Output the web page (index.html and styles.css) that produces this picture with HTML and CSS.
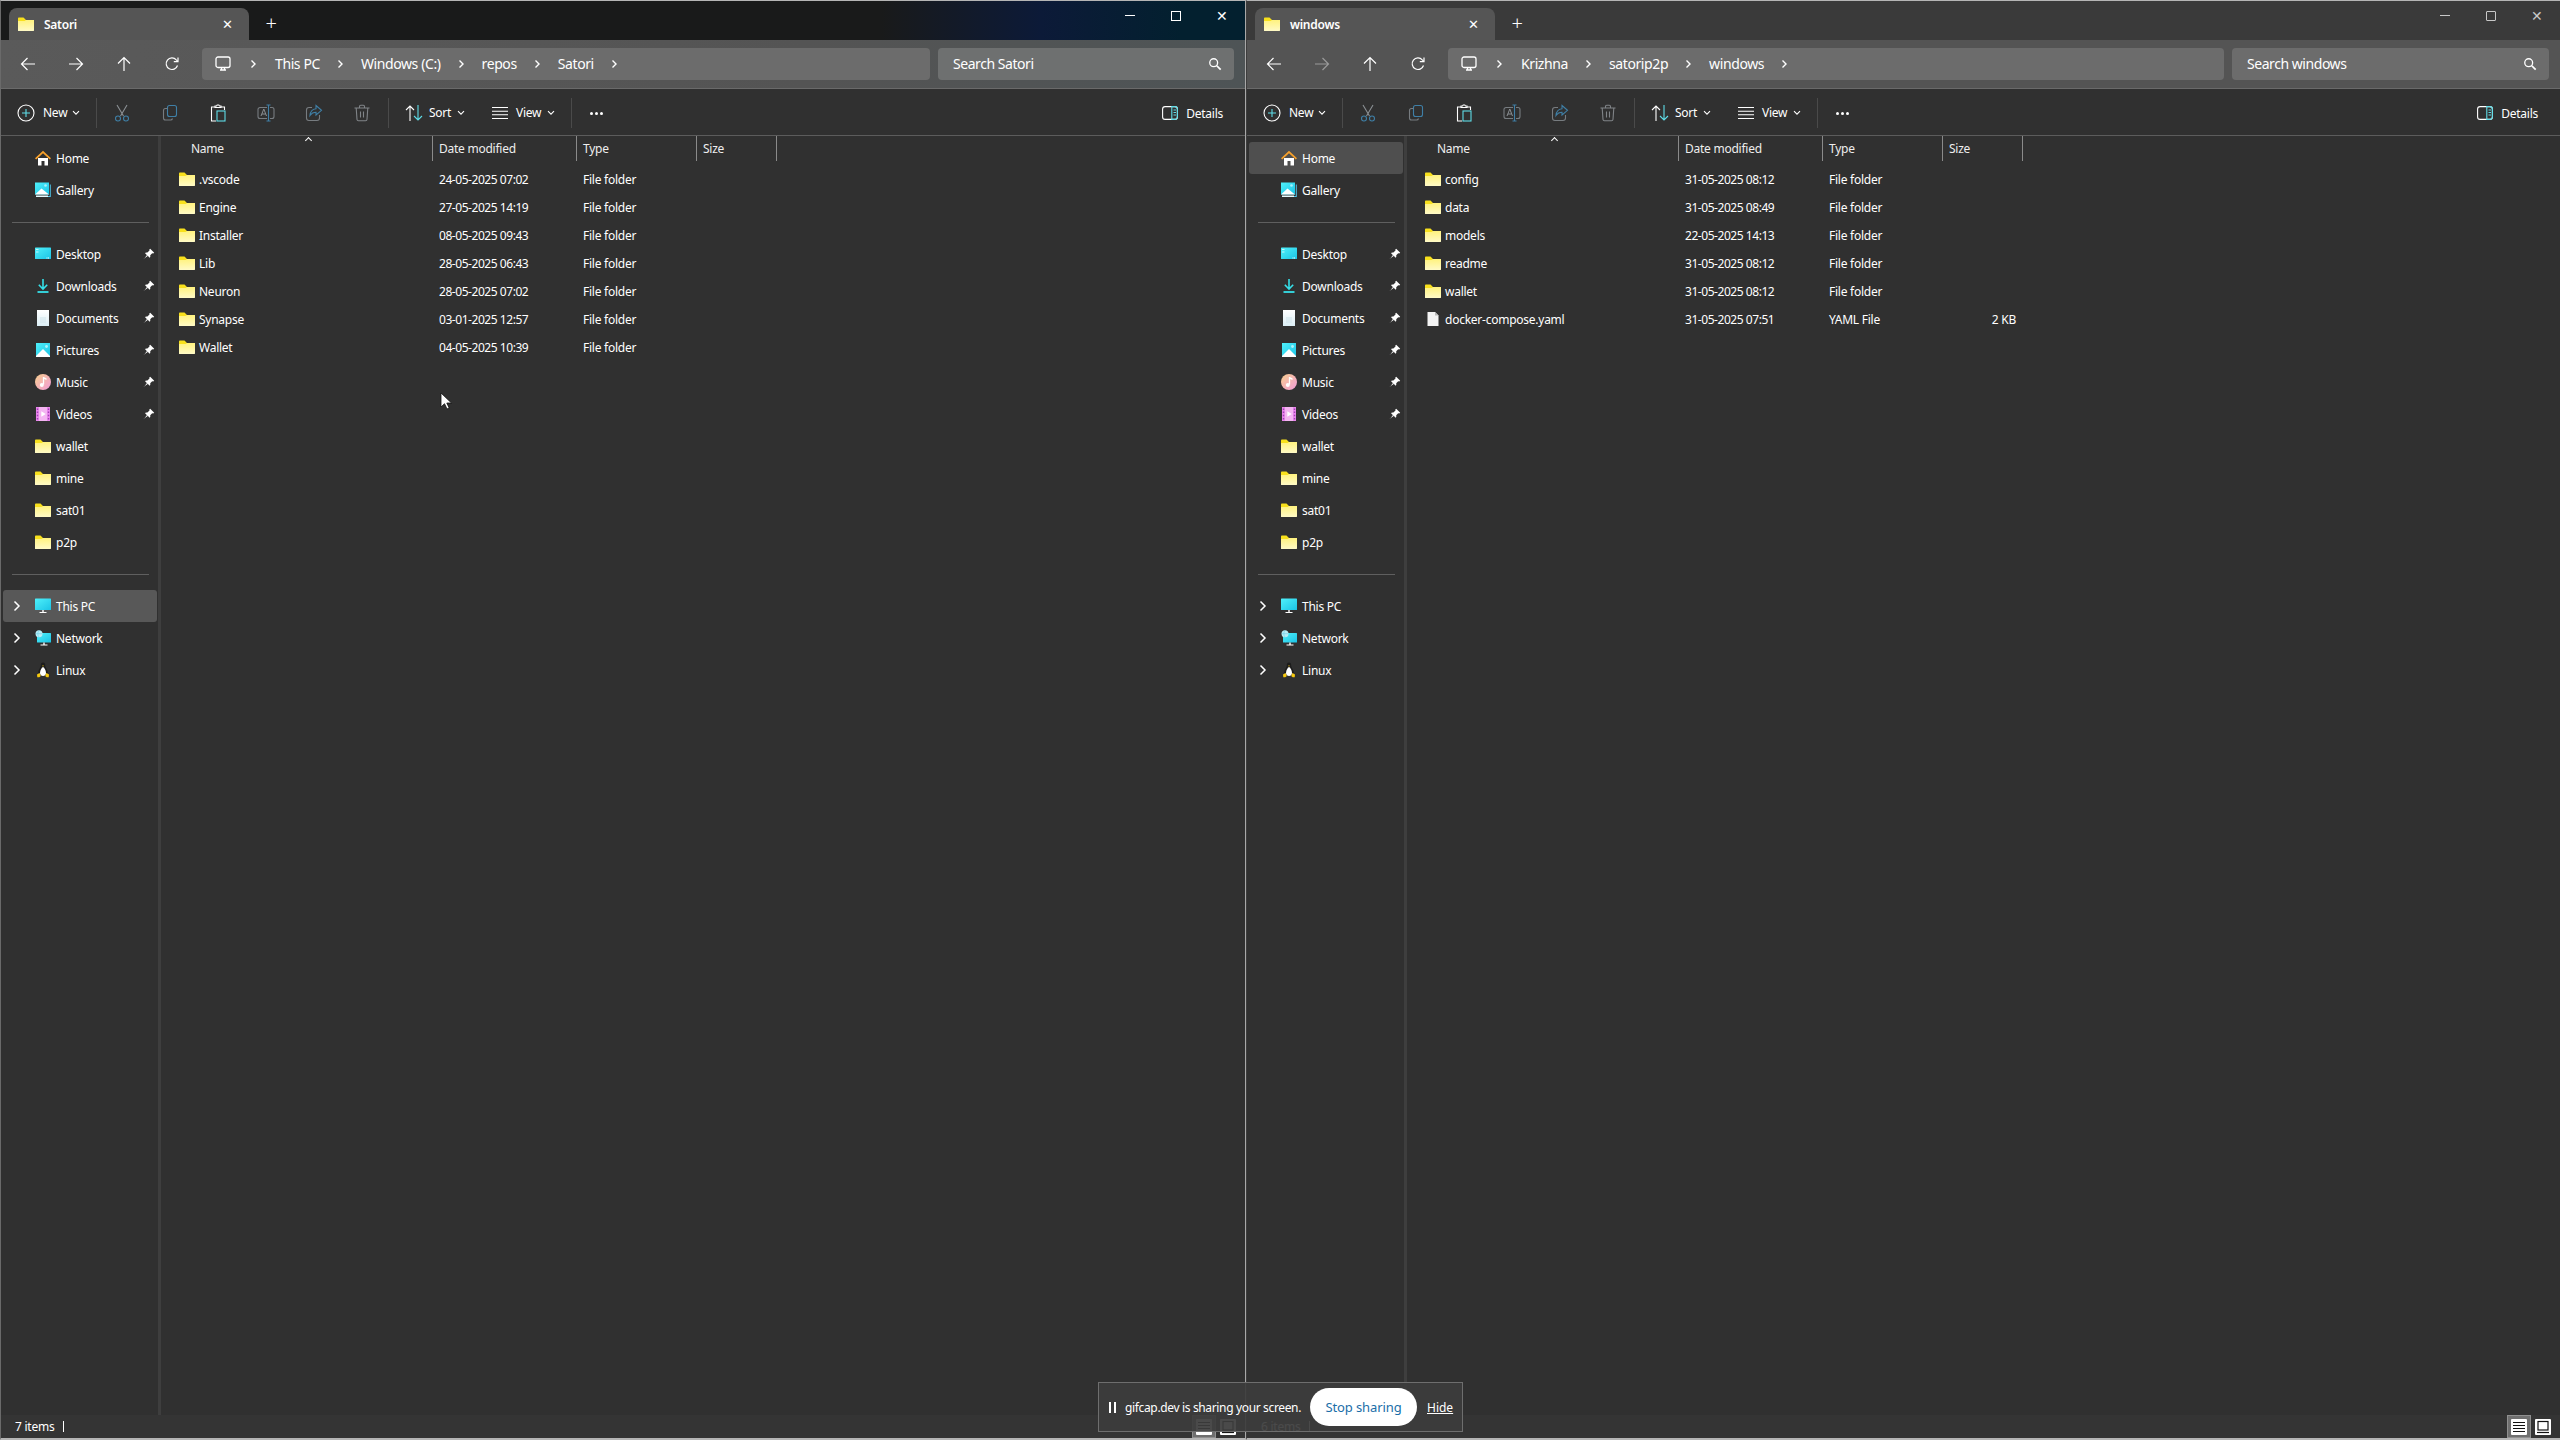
FILE: index.html
```html
<!DOCTYPE html>
<html>
<head>
    <title>File Explorer</title>
    <link rel="stylesheet" href="styles.css">
</head>
<body>
    <svg class="icon-defs" xmlns="http://www.w3.org/2000/svg">
        <defs>
            <linearGradient id="gradFolder" x1="0" y1="0" x2="0" y2="1"><stop offset="0" stop-color="#fff27e"/><stop offset="1" stop-color="#fffac6"/></linearGradient>
            <linearGradient id="gradCyan" x1="0" y1="0" x2="1" y2="1"><stop offset="0" stop-color="#4ff0fa"/><stop offset="1" stop-color="#1cc4e6"/></linearGradient>
            <linearGradient id="gradMusic" x1="0" y1="0" x2="1" y2="1"><stop offset="0" stop-color="#f7cf8e"/><stop offset="1" stop-color="#f29bd8"/></linearGradient>
            <linearGradient id="gradDoc" x1="0" y1="0" x2="0" y2="1"><stop offset="0" stop-color="#ffffff"/><stop offset="1" stop-color="#dbeef5"/></linearGradient>
        </defs>
        <symbol id="i-folder" viewBox="0 0 16 16"><path d="M0 2.5C0 2 .4 1.5 1 1.5h4.5L8 4h7.5c.3 0 .5.2.5.5V6H0z" fill="#f8e01c"/><path d="M0 5l6.5 0L8 4h8v10.5c0 .3-.2.5-.5.5H.5a.5.5 0 0 1-.5-.5z" fill="url(#gradFolder)"/></symbol>
        <symbol id="i-file" viewBox="0 0 16 16"><path d="M2.5 1h7.5l3.5 3.5V15h-11z" fill="#f3f3f3"/><path d="M10 1v3.5h3.5z" fill="#b9b9b9"/></symbol>
        <symbol id="i-home" viewBox="0 0 16 16"><path d="M3 8h10v7.5h-3.5V11h-3v4.5H3z" fill="#fff"/><path d="M8 .8l8 7.4-1.2 1.3L8 3.3 1.2 9.5 0 8.2z" fill="#f7a02a"/></symbol>
        <symbol id="i-gallery" viewBox="0 0 16 16"><path d="M14.8 2.5V14H3v1h12.8V2.5z" fill="#4fc3e8"/><rect x="0" y="0.5" width="14" height="12" fill="url(#gradCyan)"/><path d="M0 12.5l6.5-6 7.5 6z" fill="#fff"/><path d="M1 13.5h12v1.5H1z" fill="#e6fbff"/><circle cx="10.5" cy="3.5" r="1.3" fill="#a9f1fb"/></symbol>
        <symbol id="i-desktop" viewBox="0 0 16 16"><rect x="0" y="1.5" width="16" height="11.5" rx=".6" fill="url(#gradCyan)"/><path d="M1 3h2.5v1H1zM1 5.5h2.5v1H1z" fill="#c6f7fc"/><path d="M13 11.5h1v1h-1zM11.5 11.5h1v1h-1z" fill="#fff"/></symbol>
        <symbol id="i-download" viewBox="0 0 16 16"><path d="M8 1v10M3.8 6.8L8 11l4.2-4.2" fill="none" stroke="#35dfe8" stroke-width="1.6"/><path d="M2.5 14h11" stroke="#35dfe8" stroke-width="1.8"/></symbol>
        <symbol id="i-document" viewBox="0 0 16 16"><rect x="2" y="0" width="12" height="16" fill="url(#gradDoc)"/><path d="M5 8h6M5 10h6M5 12h6" stroke="#cfe3ea" stroke-width="1"/></symbol>
        <symbol id="i-pictures" viewBox="0 0 16 16"><rect x="1" y="1" width="14" height="14" fill="url(#gradCyan)"/><path d="M1 14l7-7 7 7v1H1z" fill="#fff"/><circle cx="11.5" cy="4.5" r="1.4" fill="#aef3fb"/></symbol>
        <symbol id="i-music" viewBox="0 0 16 16"><circle cx="8" cy="8" r="8" fill="url(#gradMusic)"/><path d="M8.5 3v7.5" stroke="#fff" stroke-width="1.3"/><path d="M8.5 3l3 1.3v1.6l-3-1.2z" fill="#fff"/><circle cx="6.8" cy="11" r="2" fill="#fff"/></symbol>
        <symbol id="i-video" viewBox="0 0 16 16"><rect x="1" y="1" width="14" height="14" fill="#e986ec"/><path d="M4 1h8v14H4z" fill="#f4b4f2"/><path d="M1.8 2.5h1.4v1.4H1.8zM1.8 5.5h1.4v1.4H1.8zM1.8 8.8h1.4v1.4H1.8zM1.8 12h1.4v1.4H1.8zM12.8 2.5h1.4v1.4h-1.4zM12.8 5.5h1.4v1.4h-1.4zM12.8 8.8h1.4v1.4h-1.4zM12.8 12h1.4v1.4h-1.4z" fill="#a13fb5"/><path d="M6.3 5.2l4.4 2.8-4.4 2.8z" fill="#fff"/></symbol>
        <symbol id="i-pc" viewBox="0 0 16 16"><rect x="0" y="0.5" width="16" height="11.5" rx=".6" fill="url(#gradCyan)"/><path d="M7.3 12h1.4v2H7.3zM4.5 14h7v1h-7z" fill="#fff"/></symbol>
        <symbol id="i-network" viewBox="0 0 16 16"><rect x="2" y="3" width="14" height="9.5" rx=".5" fill="url(#gradCyan)"/><path d="M8.3 12.5h1.4v2H8.3zM5.5 14.5h7v1h-7z" fill="#fff"/><circle cx="4" cy="3.7" r="3.5" fill="#b8eef8"/><path d="M1 3.7h6M4 .4c-1.6 2-1.6 4.6 0 6.6" stroke="#6fcfe6" stroke-width=".6" fill="none"/></symbol>
        <symbol id="i-linux" viewBox="0 0 16 16"><path d="M8 .5c-1.6 0-2.3 1.3-2.2 3 .1 1.6-2.6 4.4-2.7 7.5h9.8c-.1-3.100-2.800-5.900-2.700-7.500.1-1.700-.6-3-2.200-3z" fill="#1c1c1c"/><path d="M8 5c-1.300.6-3 3.300-3 6 0 2 1.400 3 3 3s3-1 3-3c0-2.700-1.700-5.400-3-6z" fill="#fff"/><path d="M2 12.500l2.600-1.500 1.200 3-1.500 1.300H2.300zM14 12.500L11.400 11l-1.200 3 1.500 1.300h2z" fill="#f6c90e"/><path d="M7.200 3.500h1.600L8 4.700z" fill="#f6c90e"/></symbol>
        <symbol id="i-pin" viewBox="0 0 12 12"><path d="M7.200.8l4 4-1 .6-1-.2-2 2.100c.3 1 .1 1.800-.5 2.500L3.900 7.100 1 11l-.2-.2L4.700 8 1.900 5.100c.7-.6 1.500-.8 2.500-.5l2.100-2-.2-1z" fill="#fff"/></symbol>
        <symbol id="i-tree" viewBox="0 0 8 12"><path d="M1.500 1.500L6 6l-4.500 4.500" fill="none" stroke="#fff" stroke-width="1.500"/></symbol>
        <symbol id="i-crumb" viewBox="0 0 8 12"><path d="M2.500 2.500L6 6 2.500 9.500" fill="none" stroke="#fff" stroke-width="1.400"/></symbol>
        <symbol id="i-caret" viewBox="0 0 8 6"><path d="M1 1.200l3 3 3-3" fill="none" stroke="#fff" stroke-width="1.100"/></symbol>
        <symbol id="i-back" viewBox="0 0 16 16"><path d="M15 8H1.500M7.500 2L1.500 8l6 6" fill="none" stroke="currentColor" stroke-width="1.200"/></symbol>
        <symbol id="i-forward" viewBox="0 0 16 16"><path d="M1 8h13.500M8.500 2l6 6-6 6" fill="none" stroke="currentColor" stroke-width="1.200"/></symbol>
        <symbol id="i-up" viewBox="0 0 16 16"><path d="M8 15V1.500M2 7.500l6-6 6 6" fill="none" stroke="currentColor" stroke-width="1.200"/></symbol>
        <symbol id="i-refresh" viewBox="0 0 16 16"><path d="M13.500 9.500A5.800 5.800 0 1 1 12.300 3.800L13.800 5.300" fill="none" stroke="#fff" stroke-width="1.200"/><path d="M14 1.500v4.200H9.800" fill="none" stroke="#fff" stroke-width="1.200"/></symbol>
        <symbol id="i-monitor" viewBox="0 0 16 16"><rect x="1" y="1" width="14" height="10.500" rx="2" fill="none" stroke="#fff" stroke-width="1.300"/><path d="M5 14h6M6.500 12v2M9.500 12v2" stroke="#fff" stroke-width="1.300"/></symbol>
        <symbol id="i-search" viewBox="0 0 16 16"><circle cx="6.500" cy="6.500" r="4.500" fill="none" stroke="#fff" stroke-width="1.500"/><path d="M10 10l4.500 4.500" stroke="#fff" stroke-width="2"/></symbol>
        <symbol id="i-new" viewBox="0 0 18 18"><circle cx="9" cy="9" r="8" fill="none" stroke="#fff" stroke-width="1.100"/><path d="M9 5v8M5 9h8" stroke="#5fdde8" stroke-width="1.100"/></symbol>
        <symbol id="i-cut" viewBox="0 0 18 18"><path d="M4 1l6.500 11M14 1L7.500 12" stroke="#8a8f93" stroke-width="1.100" fill="none"/><circle cx="5" cy="14.500" r="2.500" fill="none" stroke="#3f7fa6" stroke-width="1.100"/><circle cx="13" cy="14.500" r="2.500" fill="none" stroke="#3f7fa6" stroke-width="1.100"/></symbol>
        <symbol id="i-copy" viewBox="0 0 18 18"><rect x="6.500" y="1.500" width="9" height="11" rx="2" fill="none" stroke="#3f7fa6" stroke-width="1.100"/><path d="M6.500 4.500H4.500a2 2 0 0 0-2 2v7.500a2 2 0 0 0 2 2h5a2 2 0 0 0 2-1.500" fill="none" stroke="#777c80" stroke-width="1.100"/></symbol>
        <symbol id="i-paste" viewBox="0 0 18 18"><path d="M6 3H2.500v14H7" fill="none" stroke="#fff" stroke-width="1.100"/><path d="M6 3.500V2h1.500l.7-1h1.600l.7 1H12v1.500zM12 3h3.500v3" fill="none" stroke="#fff" stroke-width="1.100"/><rect x="8" y="7" width="8" height="10" fill="none" stroke="#5fdde8" stroke-width="1.100"/></symbol>
        <symbol id="i-rename" viewBox="0 0 18 18"><path d="M10 3.500H3a2 2 0 0 0-2 2v7a2 2 0 0 0 2 2h7M13 3.500h2a2 2 0 0 1 2 2v7a2 2 0 0 1-2 2h-2" fill="none" stroke="#777c80" stroke-width="1.100"/><path d="M11.500 1v16M9.500 1h4M9.500 17h4" stroke="#3f7fa6" stroke-width="1.100"/><path d="M4 12l2.800-7L9.500 12M5 10h3.600" fill="none" stroke="#8a8f93" stroke-width="1"/></symbol>
        <symbol id="i-share" viewBox="0 0 18 18"><path d="M7 3.500H4a2.500 2.500 0 0 0-2.500 2.500v8A2.500 2.500 0 0 0 4 16.500h8a2.500 2.500 0 0 0 2.500-2.500v-3" fill="none" stroke="#777c80" stroke-width="1.100"/><path d="M11 1.500l5.500 4.800L11 11V8.300c-2.800 0-4.500 1-6 3.200.3-3.800 2.500-6.300 6-6.700z" fill="none" stroke="#3f7fa6" stroke-width="1.100"/></symbol>
        <symbol id="i-delete" viewBox="0 0 18 18"><path d="M1.500 4h15M6.500 4V2.500c0-.8.500-1.200 1.200-1.200h2.600c.7 0 1.200.4 1.200 1.200V4M3.200 4l.8 11.500c.1.800.6 1.300 1.400 1.300h7.200c.8 0 1.300-.5 1.400-1.300L14.800 4M7.500 7.500v6M10.500 7.500v6" fill="none" stroke="#808488" stroke-width="1.100"/></symbol>
        <symbol id="i-sort" viewBox="0 0 18 18"><path d="M5 17V2M1 6l4-4 4 4" fill="none" stroke="#fff" stroke-width="1.100"/><path d="M13 1v15M9 12l4 4 4-4" fill="none" stroke="#5fdde8" stroke-width="1.100"/></symbol>
        <symbol id="i-view" viewBox="0 0 18 18"><path d="M1 3.500h16M1 7.200h16M1 10.800h16M1 14.500h16" stroke="#fff" stroke-width="1.100"/></symbol>
        <symbol id="i-details" viewBox="0 0 16 14"><rect x=".6" y=".6" width="14.800" height="12.800" rx="2.500" fill="none" stroke="#fff" stroke-width="1.100"/><path d="M9.800 .6h3.100a2.500 2.500 0 0 1 2.500 2.500v7.800a2.500 2.500 0 0 1-2.500 2.500H9.800z" fill="none" stroke="#5fdde8" stroke-width="1.100"/><path d="M11.500 4h2.500M11.500 6.500h2.500M11.500 9h2.500" stroke="#5fdde8" stroke-width="1"/></symbol>
        <symbol id="i-list-view" viewBox="0 0 16 16"><rect width="16" height="16" rx="1" fill="#fff"/><path d="M2 3.500h12M2 6.500h12M2 9.500h12M2 12.500h12" stroke="#111" stroke-width="1.200"/></symbol>
        <symbol id="i-tile-view" viewBox="0 0 16 16"><rect width="16" height="16" rx="1" fill="#fff"/><rect x="3" y="2.500" width="10" height="8.500" fill="none" stroke="#111" stroke-width="1.200"/><path d="M2 13.500h12" stroke="#111" stroke-width="1.200"/></symbol>
    </svg>

    <div class="desktop">
        <!-- left window -->
        <div class="window window-left">
            <div class="titlebar">
                <div class="tab">
                    <svg class="icon-16"><use href="#i-folder"/></svg>
                    <span class="tab-title">Satori</span>
                    <span class="tab-close">✕</span>
                </div>
                <span class="tab-add">+</span>
                <div class="win-controls">
                    <span class="win-btn"><span class="win-min"></span></span>
                    <span class="win-btn"><span class="win-max"></span></span>
                    <span class="win-btn win-close">✕</span>
                </div>
            </div>
            <div class="navbar">
                <span class="nav-btn"><svg class="icon-16"><use href="#i-back"/></svg></span>
                <span class="nav-btn"><svg class="icon-16"><use href="#i-forward"/></svg></span>
                <span class="nav-btn"><svg class="icon-16"><use href="#i-up"/></svg></span>
                <span class="nav-btn"><svg class="icon-16"><use href="#i-refresh"/></svg></span>
                <div class="address">
                    <svg class="icon-16"><use href="#i-monitor"/></svg>
                    <svg class="crumb"><use href="#i-crumb"/></svg><span>This PC</span>
                    <svg class="crumb"><use href="#i-crumb"/></svg><span>Windows (C:)</span>
                    <svg class="crumb"><use href="#i-crumb"/></svg><span>repos</span>
                    <svg class="crumb"><use href="#i-crumb"/></svg><span>Satori</span>
                    <svg class="crumb"><use href="#i-crumb"/></svg>
                </div>
                <div class="search">
                    <span>Search Satori</span>
                    <svg class="icon-search"><use href="#i-search"/></svg>
                </div>
            </div>
            <div class="toolbar">
                <span class="tb-text tb-new"><svg class="icon-18"><use href="#i-new"/></svg><span class="tb-label">New</span><svg class="caret"><use href="#i-caret"/></svg></span>
                <span class="tb-sep"></span>
                <span class="tb-icon"><svg class="icon-18"><use href="#i-cut"/></svg></span>
                <span class="tb-icon"><svg class="icon-18"><use href="#i-copy"/></svg></span>
                <span class="tb-icon"><svg class="icon-18"><use href="#i-paste"/></svg></span>
                <span class="tb-icon"><svg class="icon-18"><use href="#i-rename"/></svg></span>
                <span class="tb-icon"><svg class="icon-18"><use href="#i-share"/></svg></span>
                <span class="tb-icon"><svg class="icon-18"><use href="#i-delete"/></svg></span>
                <span class="tb-sep tb-sep-mid"></span>
                <span class="tb-text tb-sort"><svg class="icon-18"><use href="#i-sort"/></svg><span class="tb-label">Sort</span><svg class="caret"><use href="#i-caret"/></svg></span>
                <span class="tb-text tb-view"><svg class="icon-18"><use href="#i-view"/></svg><span class="tb-label">View</span><svg class="caret"><use href="#i-caret"/></svg></span>
                <span class="tb-sep tb-sep-end"></span>
                <span class="tb-more"><i></i><i></i><i></i></span>
                <span class="tb-details"><svg class="icon-details"><use href="#i-details"/></svg><span>Details</span></span>
            </div>
            <div class="main">
                <div class="sidebar">
                    <div class="side-item"><svg class="icon-16"><use href="#i-home"/></svg><span>Home</span></div>
                    <div class="side-item"><svg class="icon-16"><use href="#i-gallery"/></svg><span>Gallery</span></div>
                    <div class="side-sep"></div>
                    <div class="side-item"><svg class="icon-16"><use href="#i-desktop"/></svg><span>Desktop</span><svg class="pin"><use href="#i-pin"/></svg></div>
                    <div class="side-item"><svg class="icon-16"><use href="#i-download"/></svg><span>Downloads</span><svg class="pin"><use href="#i-pin"/></svg></div>
                    <div class="side-item"><svg class="icon-16"><use href="#i-document"/></svg><span>Documents</span><svg class="pin"><use href="#i-pin"/></svg></div>
                    <div class="side-item"><svg class="icon-16"><use href="#i-pictures"/></svg><span>Pictures</span><svg class="pin"><use href="#i-pin"/></svg></div>
                    <div class="side-item"><svg class="icon-16"><use href="#i-music"/></svg><span>Music</span><svg class="pin"><use href="#i-pin"/></svg></div>
                    <div class="side-item"><svg class="icon-16"><use href="#i-video"/></svg><span>Videos</span><svg class="pin"><use href="#i-pin"/></svg></div>
                    <div class="side-item"><svg class="icon-16"><use href="#i-folder"/></svg><span>wallet</span></div>
                    <div class="side-item"><svg class="icon-16"><use href="#i-folder"/></svg><span>mine</span></div>
                    <div class="side-item"><svg class="icon-16"><use href="#i-folder"/></svg><span>sat01</span></div>
                    <div class="side-item"><svg class="icon-16"><use href="#i-folder"/></svg><span>p2p</span></div>
                    <div class="side-sep"></div>
                    <div class="side-item side-tree side-hover"><svg class="tree"><use href="#i-tree"/></svg><svg class="icon-16"><use href="#i-pc"/></svg><span>This PC</span></div>
                    <div class="side-item side-tree"><svg class="tree"><use href="#i-tree"/></svg><svg class="icon-16"><use href="#i-network"/></svg><span>Network</span></div>
                    <div class="side-item side-tree"><svg class="tree"><use href="#i-tree"/></svg><svg class="icon-16"><use href="#i-linux"/></svg><span>Linux</span></div>
                </div>
                <div class="files">
                    <div class="file-head">
                        <span class="col-name">Name<i class="sort-arrow"></i></span>
                        <span>Date modified</span>
                        <span>Type</span>
                        <span>Size</span>
                    </div>
                    <div class="file-rows">
                        <div class="file-row"><span class="file-name"><svg class="icon-16"><use href="#i-folder"/></svg>.vscode</span><span class="file-date">24-05-2025 07:02</span><span>File folder</span><span></span></div>
                        <div class="file-row"><span class="file-name"><svg class="icon-16"><use href="#i-folder"/></svg>Engine</span><span class="file-date">27-05-2025 14:19</span><span>File folder</span><span></span></div>
                        <div class="file-row"><span class="file-name"><svg class="icon-16"><use href="#i-folder"/></svg>Installer</span><span class="file-date">08-05-2025 09:43</span><span>File folder</span><span></span></div>
                        <div class="file-row"><span class="file-name"><svg class="icon-16"><use href="#i-folder"/></svg>Lib</span><span class="file-date">28-05-2025 06:43</span><span>File folder</span><span></span></div>
                        <div class="file-row"><span class="file-name"><svg class="icon-16"><use href="#i-folder"/></svg>Neuron</span><span class="file-date">28-05-2025 07:02</span><span>File folder</span><span></span></div>
                        <div class="file-row"><span class="file-name"><svg class="icon-16"><use href="#i-folder"/></svg>Synapse</span><span class="file-date">03-01-2025 12:57</span><span>File folder</span><span></span></div>
                        <div class="file-row"><span class="file-name"><svg class="icon-16"><use href="#i-folder"/></svg>Wallet</span><span class="file-date">04-05-2025 10:39</span><span>File folder</span><span></span></div>
                    </div>
                </div>
            </div>
            <div class="statusbar">
                <span>7 items</span><span class="status-bar-sep"></span>
                <span class="view-toggle view-toggle-on"><svg class="icon-16"><use href="#i-list-view"/></svg></span>
                <span class="view-toggle"><svg class="icon-16"><use href="#i-tile-view"/></svg></span>
            </div>
        </div>

        <!-- right window -->
        <div class="window window-right">
            <div class="titlebar">
                <div class="tab">
                    <svg class="icon-16"><use href="#i-folder"/></svg>
                    <span class="tab-title">windows</span>
                    <span class="tab-close">✕</span>
                </div>
                <span class="tab-add">+</span>
                <div class="win-controls">
                    <span class="win-btn"><span class="win-min"></span></span>
                    <span class="win-btn"><span class="win-max"></span></span>
                    <span class="win-btn win-close">✕</span>
                </div>
            </div>
            <div class="navbar">
                <span class="nav-btn"><svg class="icon-16"><use href="#i-back"/></svg></span>
                <span class="nav-btn nav-btn-off"><svg class="icon-16"><use href="#i-forward"/></svg></span>
                <span class="nav-btn"><svg class="icon-16"><use href="#i-up"/></svg></span>
                <span class="nav-btn"><svg class="icon-16"><use href="#i-refresh"/></svg></span>
                <div class="address">
                    <svg class="icon-16"><use href="#i-monitor"/></svg>
                    <svg class="crumb"><use href="#i-crumb"/></svg><span>Krizhna</span>
                    <svg class="crumb"><use href="#i-crumb"/></svg><span>satorip2p</span>
                    <svg class="crumb"><use href="#i-crumb"/></svg><span>windows</span>
                    <svg class="crumb"><use href="#i-crumb"/></svg>
                </div>
                <div class="search">
                    <span>Search windows</span>
                    <svg class="icon-search"><use href="#i-search"/></svg>
                </div>
            </div>
            <div class="toolbar">
                <span class="tb-text tb-new"><svg class="icon-18"><use href="#i-new"/></svg><span class="tb-label">New</span><svg class="caret"><use href="#i-caret"/></svg></span>
                <span class="tb-sep"></span>
                <span class="tb-icon"><svg class="icon-18"><use href="#i-cut"/></svg></span>
                <span class="tb-icon"><svg class="icon-18"><use href="#i-copy"/></svg></span>
                <span class="tb-icon"><svg class="icon-18"><use href="#i-paste"/></svg></span>
                <span class="tb-icon"><svg class="icon-18"><use href="#i-rename"/></svg></span>
                <span class="tb-icon"><svg class="icon-18"><use href="#i-share"/></svg></span>
                <span class="tb-icon"><svg class="icon-18"><use href="#i-delete"/></svg></span>
                <span class="tb-sep tb-sep-mid"></span>
                <span class="tb-text tb-sort"><svg class="icon-18"><use href="#i-sort"/></svg><span class="tb-label">Sort</span><svg class="caret"><use href="#i-caret"/></svg></span>
                <span class="tb-text tb-view"><svg class="icon-18"><use href="#i-view"/></svg><span class="tb-label">View</span><svg class="caret"><use href="#i-caret"/></svg></span>
                <span class="tb-sep tb-sep-end"></span>
                <span class="tb-more"><i></i><i></i><i></i></span>
                <span class="tb-details"><svg class="icon-details"><use href="#i-details"/></svg><span>Details</span></span>
            </div>
            <div class="main">
                <div class="sidebar">
                    <div class="side-item side-active"><svg class="icon-16"><use href="#i-home"/></svg><span>Home</span></div>
                    <div class="side-item"><svg class="icon-16"><use href="#i-gallery"/></svg><span>Gallery</span></div>
                    <div class="side-sep"></div>
                    <div class="side-item"><svg class="icon-16"><use href="#i-desktop"/></svg><span>Desktop</span><svg class="pin"><use href="#i-pin"/></svg></div>
                    <div class="side-item"><svg class="icon-16"><use href="#i-download"/></svg><span>Downloads</span><svg class="pin"><use href="#i-pin"/></svg></div>
                    <div class="side-item"><svg class="icon-16"><use href="#i-document"/></svg><span>Documents</span><svg class="pin"><use href="#i-pin"/></svg></div>
                    <div class="side-item"><svg class="icon-16"><use href="#i-pictures"/></svg><span>Pictures</span><svg class="pin"><use href="#i-pin"/></svg></div>
                    <div class="side-item"><svg class="icon-16"><use href="#i-music"/></svg><span>Music</span><svg class="pin"><use href="#i-pin"/></svg></div>
                    <div class="side-item"><svg class="icon-16"><use href="#i-video"/></svg><span>Videos</span><svg class="pin"><use href="#i-pin"/></svg></div>
                    <div class="side-item"><svg class="icon-16"><use href="#i-folder"/></svg><span>wallet</span></div>
                    <div class="side-item"><svg class="icon-16"><use href="#i-folder"/></svg><span>mine</span></div>
                    <div class="side-item"><svg class="icon-16"><use href="#i-folder"/></svg><span>sat01</span></div>
                    <div class="side-item"><svg class="icon-16"><use href="#i-folder"/></svg><span>p2p</span></div>
                    <div class="side-sep"></div>
                    <div class="side-item side-tree"><svg class="tree"><use href="#i-tree"/></svg><svg class="icon-16"><use href="#i-pc"/></svg><span>This PC</span></div>
                    <div class="side-item side-tree"><svg class="tree"><use href="#i-tree"/></svg><svg class="icon-16"><use href="#i-network"/></svg><span>Network</span></div>
                    <div class="side-item side-tree"><svg class="tree"><use href="#i-tree"/></svg><svg class="icon-16"><use href="#i-linux"/></svg><span>Linux</span></div>
                </div>
                <div class="files">
                    <div class="file-head">
                        <span class="col-name">Name<i class="sort-arrow"></i></span>
                        <span>Date modified</span>
                        <span>Type</span>
                        <span>Size</span>
                    </div>
                    <div class="file-rows">
                        <div class="file-row"><span class="file-name"><svg class="icon-16"><use href="#i-folder"/></svg>config</span><span class="file-date">31-05-2025 08:12</span><span>File folder</span><span></span></div>
                        <div class="file-row"><span class="file-name"><svg class="icon-16"><use href="#i-folder"/></svg>data</span><span class="file-date">31-05-2025 08:49</span><span>File folder</span><span></span></div>
                        <div class="file-row"><span class="file-name"><svg class="icon-16"><use href="#i-folder"/></svg>models</span><span class="file-date">22-05-2025 14:13</span><span>File folder</span><span></span></div>
                        <div class="file-row"><span class="file-name"><svg class="icon-16"><use href="#i-folder"/></svg>readme</span><span class="file-date">31-05-2025 08:12</span><span>File folder</span><span></span></div>
                        <div class="file-row"><span class="file-name"><svg class="icon-16"><use href="#i-folder"/></svg>wallet</span><span class="file-date">31-05-2025 08:12</span><span>File folder</span><span></span></div>
                        <div class="file-row"><span class="file-name"><svg class="icon-16"><use href="#i-file"/></svg>docker-compose.yaml</span><span class="file-date">31-05-2025 07:51</span><span>YAML File</span><span class="file-size">2 KB</span></div>
                    </div>
                </div>
            </div>
            <div class="statusbar">
                <span>6 items</span><span class="status-bar-sep"></span>
                <span class="view-toggle view-toggle-on"><svg class="icon-16"><use href="#i-list-view"/></svg></span>
                <span class="view-toggle"><svg class="icon-16"><use href="#i-tile-view"/></svg></span>
            </div>
        </div>

        <!-- browser sharing notice, over both windows -->
        <div class="share-bar">
            <span class="share-pause"><i></i><i></i></span>
            <span class="share-text">gifcap.dev is sharing your screen.</span>
            <span class="share-stop">Stop sharing</span>
            <span class="share-hide">Hide</span>
        </div>

        <svg class="cursor" viewBox="0 0 12 18"><path d="M1 1v14l3.500-3.300L7 17l2.200-1-2.400-5H11.500z" fill="#fff" stroke="#111" stroke-width=".8"/></svg>
    </div>
</body>
</html>
```

FILE: styles.css
```css
* {
    box-sizing: border-box;
}
html, body {
    margin: 0;
    padding: 0;
    background: #303030;
}
body {
    font-family: "Noto Sans", "Open Sans", sans-serif;
    font-size: 12px;
    letter-spacing: -0.25px;
    color: #fff;
}
.icon-defs {
    position: absolute;
    width: 0;
    height: 0;
}
.icon-16 {
    width: 16px;
    height: 16px;
    flex: none;
}
.icon-18 {
    width: 18px;
    height: 18px;
    flex: none;
}

.desktop {
    position: relative;
    display: flex;
    width: 2560px;
    height: 1440px;
    overflow: hidden;
}
.window {
    display: flex;
    flex-direction: column;
    height: 100%;
    background: #303030;
    border-top: 1px solid #b5b5b5;
    border-left: 1px solid #6a6a6a;
    border-bottom: 2px solid #b5b5b5;
}
.window-left {
    width: 1246px;
    border-right: 1px solid #a8a8a8;
}
.window-right {
    flex: 1;
    border-left-color: #3d3d3d;
}

/* title bar */
.titlebar {
    display: flex;
    align-items: flex-end;
    height: 39px;
    padding-left: 8px;
    flex: none;
}
.window-left .titlebar {
    background: linear-gradient(90deg, #191a1a 0, #191a1a 880px, #0c1a38 1040px, #03202f 1180px, #03202f 100%);
}
.window-right .titlebar {
    background: #3a3a3a;
}
.tab {
    display: flex;
    align-items: center;
    width: 240px;
    height: 32px;
    padding-left: 9px;
    border-radius: 8px 8px 0 0;
    background: #555;
}
.tab-title {
    margin-left: 10px;
    font-weight: 600;
}
.tab-close {
    margin-left: auto;
    margin-right: 16px;
    font-size: 13px;
}
.tab-add {
    width: 44px;
    height: 32px;
    line-height: 30px;
    text-align: center;
    font-size: 20px;
    font-weight: 300;
}
.win-controls {
    display: flex;
    align-self: flex-start;
    margin-left: auto;
}
.win-btn {
    display: flex;
    align-items: center;
    justify-content: center;
    width: 46px;
    height: 29px;
    font-size: 14px;
}
.win-min {
    width: 10px;
    height: 1px;
    background: #fff;
}
.win-max {
    width: 10px;
    height: 10px;
    border: 1px solid #fff;
}
.window-right .win-btn {
    color: #c8c8c8;
}
.window-right .win-min {
    background: #c8c8c8;
}
.window-right .win-max {
    border-color: #c8c8c8;
    border-radius: 1px;
}

/* navigation bar */
.navbar {
    display: flex;
    align-items: center;
    height: 49px;
    padding: 0 11px 1px 3px;
    flex: none;
    border-bottom: 1px solid #6a6a6a;
}
.window-left .navbar {
    background: linear-gradient(90deg, #5a5a5a 0, #545454 800px, #4e5456 100%);
}
.window-right .navbar {
    background: #545454;
}
.nav-btn {
    display: flex;
    align-items: center;
    justify-content: center;
    width: 48px;
    height: 32px;
    color: #fff;
}
.nav-btn-off {
    color: #9a9a9a;
}
.address {
    display: flex;
    align-items: center;
    flex: 1;
    height: 32px;
    margin-left: 6px;
    margin-right: 8px;
    padding-left: 13px;
    border-radius: 4px;
    background: #6c6c6c;
    font-size: 14px;
    letter-spacing: -0.4px;
}
.crumb {
    width: 8px;
    height: 12px;
    margin: 0 17px 0 16px;
    flex: none;
}
.address .icon-16 + .crumb {
    margin-left: 18px;
    margin-right: 18px;
}
.search {
    display: flex;
    align-items: center;
    justify-content: space-between;
    width: 296px;
    height: 32px;
    padding: 0 12px 0 15px;
    border-radius: 4px;
    background: #6e7070;
    font-size: 14px;
    letter-spacing: -0.45px;
}
.window-right .search {
    width: 317px;
    background: #6c6c6c;
}
.icon-search {
    width: 14px;
    height: 14px;
}

/* command bar */
.toolbar {
    display: flex;
    align-items: center;
    height: 47px;
    padding-top: 2px;
    padding-left: 16px;
    flex: none;
    border-bottom: 1px solid #5c5c5c;
}
.tb-text {
    display: flex;
    align-items: center;
}
.tb-label {
    line-height: 16px;
}
.tb-new {
    width: 63px;
}
.tb-new .tb-label {
    width: 33px;
    margin-left: 8px;
}
.tb-sep {
    width: 1px;
    height: 30px;
    margin-left: 16px;
    margin-right: 1px;
    background: #4a4a4a;
}
.tb-sep-mid {
    margin-left: 2px;
    margin-right: 16px;
}
.tb-icon {
    display: flex;
    align-items: center;
    justify-content: center;
    width: 48px;
    height: 32px;
}
.caret {
    width: 8px;
    height: 6px;
    flex: none;
}
.tb-sort {
    width: 86px;
}
.tb-sort .tb-label {
    width: 28px;
    margin-left: 6px;
}
.tb-view {
    width: 80px;
}
.tb-view .tb-label {
    width: 31px;
    margin-left: 7px;
}
.tb-sep-end {
    margin-left: 0;
}
.tb-more {
    display: flex;
    gap: 2px;
    margin-left: 17px;
}
.tb-more i {
    width: 3px;
    height: 3px;
    border-radius: 50%;
    background: #fff;
}
.tb-details {
    display: flex;
    align-items: center;
    gap: 8px;
    margin-left: auto;
    margin-right: 22px;
}
.icon-details {
    width: 16px;
    height: 14px;
}

/* sidebar + list */
.main {
    display: flex;
    flex: 1;
    min-height: 0;
}
.sidebar {
    width: 160px;
    padding: 6px 1px 0 2px;
    flex: none;
    border-right: 3px solid #3e3e3e;
}
.side-item {
    display: flex;
    align-items: center;
    height: 32px;
    padding: 0 2px 0 32px;
    border-radius: 3px;
}
.side-item > span {
    margin-left: 5px;
}
.side-tree {
    padding-left: 10px;
}
.tree {
    width: 8px;
    height: 12px;
    margin-right: 14px;
    flex: none;
}
.side-hover {
    background: #585858;
}
.side-active {
    background: #4f4f4f;
}
.side-sep {
    height: 1px;
    margin: 16px 8px 15px 9px;
    background: #5f5f5f;
}
.pin {
    width: 12px;
    height: 12px;
    margin-left: auto;
    flex: none;
}
.files {
    flex: 1;
    min-width: 0;
}
.file-head,
.file-row {
    display: grid;
    grid-template-columns: 272px 144px 120px 80px;
}
.file-head {
    height: 25px;
}
.file-head > span {
    position: relative;
    padding-left: 6px;
    line-height: 25px;
    border-right: 1px solid #8a8a8a;
    color: #eee;
}
.file-head > .col-name {
    padding-left: 30px;
}
.sort-arrow {
    position: absolute;
    left: 145px;
    top: 2px;
    width: 5px;
    height: 5px;
    border-top: 1px solid #fff;
    border-left: 1px solid #fff;
    transform: rotate(45deg);
}
.file-rows {
    padding-top: 4px;
}
.file-row {
    height: 28px;
    align-items: center;
}
.file-row > span {
    padding-left: 6px;
}
.file-row > .file-name {
    display: flex;
    align-items: center;
    gap: 4px;
    padding-left: 18px;
}
.file-date {
    letter-spacing: -0.45px;
}
.file-row > .file-size {
    padding-right: 7px;
    text-align: right;
}

/* status bar */
.statusbar {
    display: flex;
    align-items: center;
    height: 23px;
    padding-left: 14px;
    flex: none;
    background: #343434;
}
.status-bar-sep {
    width: 1px;
    height: 11px;
    margin-left: 9px;
    background: #fff;
}
.view-toggle {
    display: flex;
    align-items: center;
    justify-content: center;
    width: 24px;
    height: 23px;
}
.view-toggle-on {
    margin-left: auto;
    background: #6f6f6f;
    border: 1px solid #8f8f8f;
}
.view-toggle:last-child {
    margin-right: 5px;
}

/* overlays */
.share-bar {
    position: absolute;
    left: 1098px;
    top: 1382px;
    display: flex;
    align-items: center;
    width: 365px;
    height: 50px;
    padding-left: 10px;
    border: 1px solid #6e6e6e;
    background: rgba(60, 60, 60, 0.93);
    font-size: 12px;
    letter-spacing: -0.35px;
}
.share-pause {
    display: flex;
    gap: 3px;
}
.share-pause i {
    width: 2px;
    height: 11px;
    background: #fff;
}
.share-text {
    margin-left: 9px;
}
.share-stop {
    display: flex;
    align-items: center;
    justify-content: center;
    position: absolute;
    left: 211px;
    width: 107px;
    height: 38px;
    border-radius: 19px;
    background: #fff;
    color: #1a6ea8;
    font-size: 13px;
    letter-spacing: -0.1px;
}
.share-hide {
    position: absolute;
    left: 328px;
    letter-spacing: 0;
    text-decoration: underline;
}
.cursor {
    position: absolute;
    left: 440px;
    top: 392px;
    width: 12px;
    height: 18px;
}
```
